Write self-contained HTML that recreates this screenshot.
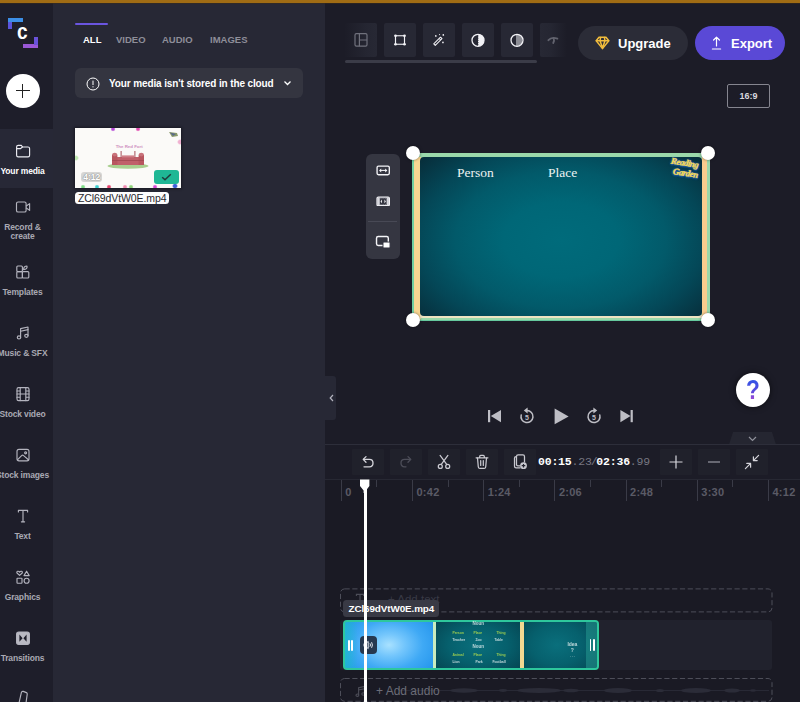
<!DOCTYPE html>
<html lang="en">
<head>
<meta charset="utf-8">
<title>Clipchamp editor</title>
<style>
*{box-sizing:border-box;margin:0;padding:0}
html,body{width:800px;height:702px;overflow:hidden;background:#1c1c27;font-family:"Liberation Sans",sans-serif;color:#fff}
.abs{position:absolute}
#app{position:relative;width:800px;height:702px;overflow:hidden;background:#1c1c27}
#topbar{left:0;top:0;width:800px;height:2.6px;background:#a06c14;z-index:50}
#topshadow{left:0;top:2.6px;width:800px;height:1.6px;background:#3a2c1a;opacity:.55;z-index:50}
/* sidebar */
#side{left:0;top:0;width:53px;height:702px;background:#1e1e2a}
#side .sel{left:0;top:128.5px;width:53px;height:59.8px;background:#272836}
.sitem{left:-14px;width:73px;text-align:center;font-size:8.5px;font-weight:bold;color:#a9a9b3;line-height:9.5px;white-space:nowrap;letter-spacing:-.15px}
.sitem.on{color:#fff}
svg.sic{fill:none;stroke:#b4b4be;stroke-width:1.15;stroke-linecap:round;stroke-linejoin:round}
#plus{left:5.6px;top:73.6px;width:34px;height:34px;border-radius:50%;background:#fff}
#plus:before{content:"";position:absolute;left:10px;top:16.5px;width:14px;height:1.4px;background:#222}
#plus:after{content:"";position:absolute;left:16.3px;top:10px;width:1.4px;height:14px;background:#222}
/* media panel */
#panel{left:53px;top:0;width:272px;height:702px;background:#272835}
.tab{top:34px;font-size:9.5px;font-weight:bold;color:#8e8e99;letter-spacing:0;line-height:12px}
.tab.on{color:#fff}
#tabline{left:75px;top:23.4px;width:33px;height:2px;background:#6a55e0;border-radius:1px}
#banner{left:75px;top:68px;width:228px;height:30px;border-radius:6px;background:#343540}
#banner .txt{left:34px;top:10px;font-size:10px;font-weight:bold;color:#fff;line-height:12px;white-space:nowrap;letter-spacing:-.12px}
#thumb{left:75.2px;top:128.3px;width:106px;height:59.5px;background:#f5f3f2;overflow:hidden;box-shadow:0 0 2px 1px rgba(15,15,22,.55)}
#fname{left:75.2px;top:192px;width:94px;height:12.4px;border-radius:3.5px;background:#fdfdfd;color:#2a2a30;font-size:10.5px;line-height:12.6px;text-align:center;white-space:nowrap;letter-spacing:-.1px}
/* top toolbar */
.tbtn{top:22.5px;height:34px;background:#272834;border-radius:2px}
.tbtn svg{position:absolute;left:50%;top:50%;transform:translate(-50%,-50%)}
#tscroll{left:345px;top:60px;width:192px;height:3px;background:#3b3c48;border-radius:2px}
#upgrade{left:578px;top:26px;width:110px;height:34px;border-radius:17px;background:#2b2c37}
#upgrade span{position:absolute;left:40px;top:10.8px;font-size:13px;font-weight:bold;line-height:14px;color:#fff}
#export{left:695px;top:26px;width:90px;height:34px;border-radius:17px;background:#5a49d6}
#export span{position:absolute;left:36px;top:10.8px;font-size:13px;font-weight:bold;line-height:14px;color:#fff}
#ratio{left:727px;top:84px;width:43px;height:24px;border:1px solid #85858f;border-radius:2px;font-size:9px;font-weight:bold;line-height:22px;text-align:center;color:#d8d8de}
/* preview */
#ftool{left:366px;top:153.8px;width:33.5px;height:105.2px;border-radius:6px;background:#353641}
#ftool .sep{left:2px;top:66.9px;width:29px;height:1px;background:#484955}
#frame{left:412px;top:153px;width:297.5px;height:168px;border-radius:2px;background:#9ad8aa;overflow:hidden}
#frame .gl{left:0;top:6px;width:2.2px;height:162px;background:#70cfa2}
#frame .gb{left:0;top:166.6px;width:297.5px;height:1.4px;background:#66c99e}
#frame .yl{left:2px;top:3.5px;width:6.5px;height:162px;background:#f8d692}
#frame .yr{left:289.5px;top:3.5px;width:5px;height:162px;background:#f9cc8e}
#frame .yb{left:8px;top:162px;width:282px;height:3.2px;background:#efe4c2}
#frame .in{left:8px;top:3.5px;width:282px;height:159px;border-radius:4px;background:radial-gradient(ellipse 68% 78% at 50% 52%,#006b7b 0%,#006777 30%,#025a6a 55%,#044757 75%,#063644 90%,#072c38 100%)}
.handle{width:14px;height:14px;border-radius:50%;background:#fff;box-shadow:0 0 3px rgba(0,0,0,.5)}
#rg{left:670px;top:159px;-webkit-text-stroke:.35px #f6da55;width:32px;font-family:"Liberation Serif",serif;font-style:italic;font-weight:bold;font-size:9px;line-height:9.5px;color:#f6da55;letter-spacing:-.5px;transform:rotate(9deg);text-shadow:0 0 1.5px #2d6fd6,0 0 2.5px #3a7fe6,0 1px 2px #2d5fc6;white-space:nowrap}
.ptxt{font-family:"Liberation Serif",serif;font-size:13.5px;color:#eef3f3;line-height:14px}
/* controls */
#help{left:735.8px;top:373px;width:34px;height:34px;border-radius:50%;background:#fff;box-shadow:0 0 6px rgba(0,0,0,.6)}
#help span{position:absolute;left:0;top:1.5px;width:34px;text-align:center;font-size:27px;font-weight:bold;line-height:30px;transform:scaleX(.84);background:linear-gradient(180deg,#2f55e6 15%,#5a48dc 55%,#b24bd4 90%);-webkit-background-clip:text;background-clip:text;color:transparent}
#coll{left:729px;top:432px;width:47px;height:12.5px;background:#252631;clip-path:polygon(4px 0,43px 0,47px 100%,0 100%)}
#handleL{left:325px;top:376px;width:11px;height:43.5px;background:#272835;border-radius:0 3px 3px 0}
/* timeline */
#tl{left:325px;top:444px;width:475px;height:258px;background:#1a1a24}
#tlbar{left:325px;top:444px;width:475px;height:36px;background:#1c1c27;border-top:1px solid #2d2e3a}
.tlb{top:448.5px;height:26.5px;background:#20212b;border-radius:1px}
.tlb svg{position:absolute;left:50%;top:50%;transform:translate(-50%,-50%)}
#time{left:538px;top:455px;font-family:"Liberation Mono",monospace;font-size:11.5px;font-weight:bold;line-height:14px;color:#fff;white-space:nowrap;letter-spacing:-.2px}
#time i.sl{margin:0 -1px}
#time i{font-style:normal;font-weight:normal;color:#777782}
.rl{top:485.5px;font-size:11px;font-weight:bold;color:#5a5b66;line-height:12px;letter-spacing:.25px}
.tick{top:480px;width:1px;background:#3a3b47}
.dash{border:1px dashed #5a5b66;border-radius:4px}
#vtrack{left:340px;top:620px;width:432px;height:50px;background:#21222d;border-radius:3px}
#clip{left:343px;top:620px;width:256px;height:50px;border-radius:4px;background:#2ec79c;overflow:hidden}
.ct{font-size:3.4px;line-height:4px;opacity:.8;color:#e8f2f2;white-space:nowrap;font-weight:bold}
#tip{left:343.2px;top:600.2px;width:96.3px;height:17px;border-radius:3.5px;background:#393a45;font-size:9.9px;font-weight:bold;line-height:17.4px;text-align:center;color:#fff;letter-spacing:-.1px}
#rulerline{left:325px;top:478.5px;width:475px;height:1px;background:#272833}
.addt{font-size:11.5px;line-height:14px;color:#5f606b;white-space:nowrap}
#ph{left:364.3px;top:480px;width:2.4px;height:222px;background:#fff;z-index:20}
</style>
</head>
<body>
<div id="app">
<div id="topbar" class="abs"></div><div id="topshadow" class="abs"></div>

<!-- SIDEBAR -->
<div id="side" class="abs">
  <div class="sel abs"></div>
  <svg class="abs" style="left:7px;top:17px" width="32" height="32" viewBox="0 0 32 32">
    <rect x="1" y="1" width="15" height="4" fill="#3c8fe6"/>
    <rect x="1" y="5" width="4" height="7" fill="#5a55dc"/>
    <rect x="16" y="27" width="15" height="4" fill="#9a58d6"/>
    <rect x="27" y="20" width="4" height="8" fill="#6a52da"/>
    <text x="10" y="22.2" font-family="Liberation Sans, sans-serif" font-weight="bold" font-size="22" textLength="10.6" lengthAdjust="spacingAndGlyphs" fill="#fff">c</text>
  </svg>
  <div id="plus" class="abs"></div>
  <!-- your media -->
  <svg class="abs sic" style="left:14px;top:142px" width="18" height="18" viewBox="0 0 18 18"><path d="M2.6 5.2 V13.2 Q2.6 14.8 4.2 14.8 H14 Q15.6 14.8 15.6 13.2 V6.6 Q15.6 5 14 5 H8.6 L7.3 3.3 H4.2 Q2.6 3.3 2.6 4.9 Z" stroke="#ececf2"/><path d="M2.8 6.6 H6.6 L8.4 5" stroke="#ececf2"/></svg>
  <div class="sitem on abs" style="top:167.2px">Your media</div>
  <!-- record -->
  <svg class="abs sic" style="left:14px;top:198px" width="18" height="18" viewBox="0 0 18 18"><rect x="2.5" y="4" width="9.6" height="10" rx="1.6"/><path d="M12.3 8 L15.6 5.6 V12.4 L12.3 10"/></svg>
  <div class="sitem abs" style="top:223px;line-height:9px">Record &amp;<br>create</div>
  <!-- templates -->
  <svg class="abs sic" style="left:14px;top:263px" width="18" height="18" viewBox="0 0 18 18"><rect x="2.8" y="3" width="5.6" height="5.6" rx="1"/><rect x="2.8" y="8.6" width="5.6" height="6.4" rx="1"/><rect x="8.4" y="8.6" width="6.4" height="6.4" rx="1"/><path d="M9.6 6.6 Q9.6 3 13 3 Q13.6 6.6 9.6 6.6Z"/></svg>
  <div class="sitem abs" style="top:288px">Templates</div>
  <!-- music -->
  <svg class="abs sic" style="left:14px;top:324px" width="18" height="18" viewBox="0 0 18 18"><path d="M6.6 13.2 V4.6 L14 3 V11.6"/><path d="M6.6 7.2 L14 5.6"/><ellipse cx="5" cy="13.4" rx="1.7" ry="1.5"/><ellipse cx="12.4" cy="11.8" rx="1.7" ry="1.5"/></svg>
  <div class="sitem abs" style="top:349px">Music &amp; SFX</div>
  <!-- stock video -->
  <svg class="abs sic" style="left:14px;top:385px" width="18" height="18" viewBox="0 0 18 18"><rect x="3" y="2.6" width="12" height="13" rx="1.6"/><path d="M6.2 2.6 V15.6 M11.8 2.6 V15.6 M6.2 9 H11.8 M3 6 H6.2 M3 9 H6.2 M3 12.2 H6.2 M11.8 6 H15 M11.8 9 H15 M11.8 12.2 H15"/></svg>
  <div class="sitem abs" style="top:410px">Stock video</div>
  <!-- stock images -->
  <svg class="abs sic" style="left:14px;top:446px" width="18" height="18" viewBox="0 0 18 18"><rect x="3" y="3.4" width="12" height="11.4" rx="2"/><path d="M3.6 13.6 L7.6 9.6 Q8.6 8.8 9.6 9.6 L14.4 13.8"/><circle cx="11.6" cy="6.8" r="1"/></svg>
  <div class="sitem abs" style="top:471px">Stock images</div>
  <!-- text -->
  <svg class="abs sic" style="left:14px;top:507px" width="18" height="18" viewBox="0 0 18 18"><path d="M4.4 5 V3.4 H13.6 V5 M9 3.4 V14.8 M7.4 14.8 H10.6"/></svg>
  <div class="sitem abs" style="top:532px">Text</div>
  <!-- graphics -->
  <svg class="abs sic" style="left:14px;top:568px" width="18" height="18" viewBox="0 0 18 18"><path d="M5.6 7.4 L3 5 Q2.4 3.6 3.8 3.3 Q5 3.2 5.6 4.2 Q6.2 3.2 7.4 3.3 Q8.8 3.6 8.2 5 Z"/><path d="M12.6 3.2 L15.2 7.6 H10 Z"/><rect x="3" y="10.2" width="5" height="5" rx=".6"/><circle cx="12.6" cy="12.7" r="2.5"/></svg>
  <div class="sitem abs" style="top:593px">Graphics</div>
  <!-- transitions -->
  <svg class="abs sic" style="left:14px;top:629px" width="18" height="18" viewBox="0 0 18 18"><rect x="2.6" y="3" width="12.8" height="12.4" rx="2.2" fill="#b9b9c2"/><path d="M5.4 5.6 L8.6 9.2 L5.4 12.8 Z M12.6 5.6 L9.4 9.2 L12.6 12.8 Z" fill="#1e1e2a" stroke="none"/></svg>
  <div class="sitem abs" style="top:653.5px">Transitions</div>
  <!-- brand -->
  <svg class="abs sic" style="left:14px;top:688px" width="18" height="18" viewBox="0 0 18 18"><path d="M5 15 L7.4 4.4 Q7.8 3 9.2 3.4 L12.4 4.6 Q13.4 5.2 13.2 6.4 L12 15"/></svg>
</div>

<!-- MEDIA PANEL -->
<div id="panel" class="abs"></div>
<div id="tabline" class="abs"></div>
<div class="tab on abs" style="left:83px">ALL</div>
<div class="tab abs" style="left:116px">VIDEO</div>
<div class="tab abs" style="left:162px">AUDIO</div>
<div class="tab abs" style="left:210px">IMAGES</div>
<div id="banner" class="abs">
  <svg class="abs" style="left:11px;top:8.6px" width="14" height="14" viewBox="0 0 14 14"><circle cx="7" cy="7" r="6" fill="none" stroke="#fff" stroke-width="1"/><rect x="6.5" y="3.6" width="1" height="4.4" fill="#fff"/><rect x="6.5" y="9.2" width="1" height="1.2" fill="#fff"/></svg>
  <div class="txt abs">Your media isn't stored in the cloud</div>
  <svg class="abs" style="left:208px;top:12px" width="9" height="7" viewBox="0 0 9 7"><path d="M1.5 1.5 L4.5 4.5 L7.5 1.5" fill="none" stroke="#fff" stroke-width="1.3"/></svg>
</div>
<div id="thumb" class="abs">
  <div class="abs" style="left:0;top:0;width:106px;height:60px;background:
    radial-gradient(circle at 38px 1px,#b44ad6 0,#b44ad6 1.2px,transparent 2.6px),
    radial-gradient(circle at 63px 1px,#e24ab0 0,#e24ab0 1.2px,transparent 2.6px),
    radial-gradient(circle at 8px 59px,#7ddc86 0,#7ddc86 1.2px,transparent 2.6px),
    radial-gradient(circle at 22px 59px,#3ecfd0 0,#3ecfd0 1.2px,transparent 2.6px),
    radial-gradient(circle at 34px 59px,#e6456e 0,#e6456e 1.2px,transparent 2.6px),
    radial-gradient(circle at 50px 59px,#f08ab0 0,#f08ab0 1.2px,transparent 2.6px),
    radial-gradient(circle at 56px 59px,#8ed47a 0,#8ed47a 1.2px,transparent 2.6px),
    radial-gradient(circle at 80px 59px,#d84ad6 0,#d84ad6 1.2px,transparent 2.6px),
    radial-gradient(circle at 100px 58px,#3a5fd8 0,#3a5fd8 1.5px,transparent 3px),
    radial-gradient(circle at 1px 30px,#bfe8b0 0,#bfe8b0 1.5px,transparent 3px),
    radial-gradient(circle at 105px 14px,#f0b0d0 0,#f0b0d0 1.5px,transparent 3px),
    #fbfaf8"></div>
  <div class="abs" style="left:40px;top:15.4px;width:28px;font-size:4.4px;line-height:5px;font-weight:bold;color:#cf8fc0;text-align:center;white-space:nowrap">The Red Fort</div>
  <svg class="abs" style="left:32px;top:20px" width="42" height="22" viewBox="0 0 42 22">
    <ellipse cx="21" cy="18" rx="20.5" ry="2.8" fill="#a9cf8f"/>
    <rect x="5" y="9" width="32" height="8" fill="#c0606a"/>
    <rect x="5" y="6.8" width="5.4" height="10.2" fill="#b8565f"/><rect x="31.6" y="6.8" width="5.4" height="10.2" fill="#b8565f"/>
    <ellipse cx="7.7" cy="6.6" rx="2.6" ry="1.8" fill="#c8727a"/><ellipse cx="34.3" cy="6.6" rx="2.6" ry="1.8" fill="#c8727a"/>
    <rect x="13.6" y="3" width="1" height="6.4" fill="#a8505a"/><rect x="27.4" y="3" width="1" height="6.4" fill="#a8505a"/>
    <rect x="15" y="7.4" width="12" height="2" fill="#d08088"/>
    <rect x="5" y="12" width="32" height=".8" fill="#a04852"/>
  </svg>
  <svg class="abs" style="left:93px;top:3px" width="11" height="7" viewBox="0 0 11 7"><path d="M1 1 L9 2 L10 5 L4 6 Z" fill="#8a9a6a"/><path d="M2 1.4 L8 3 L5 5 Z" fill="#5a6a8a"/></svg>
  <div class="abs" style="left:6px;top:44px;width:21px;height:10px;border-radius:3px;background:rgba(150,150,150,.35)"></div>
  <div class="abs" style="left:6px;top:44px;width:21px;font-size:8.5px;line-height:10px;font-weight:bold;color:#fff;text-align:center;text-shadow:0 0 1.5px #777,0 0 1px #888">4:12</div>
  <div class="abs" style="left:79px;top:41.5px;width:25px;height:14px;border-radius:3px;background:#1fb795">
    <svg class="abs" style="left:7px;top:3px" width="11" height="8" viewBox="0 0 11 8"><path d="M1.2 4.2 L4 6.8 L9.8 1.2" fill="none" stroke="#1e3b3a" stroke-width="1.5"/></svg>
  </div>
</div>
<div id="fname" class="abs">ZCl69dVtW0E.mp4</div>

<!-- TOP TOOLBAR -->
<div class="tbtn abs" style="left:344px;width:33px;background:linear-gradient(90deg,#1c1c27 0%,#252632 70%,#272834 100%)">
  <svg width="16" height="16" viewBox="0 0 16 16" fill="none" stroke="#70717c" stroke-width="1.2"><rect x="2" y="1.6" width="12" height="12.6" rx="1.4"/><path d="M6.4 1.6 V14.2 M6.4 8 H14"/></svg>
</div>
<div class="tbtn abs" style="left:383.5px;width:32.5px">
  <svg width="14.4" height="13.6" viewBox="0 0 16 16" preserveAspectRatio="none" fill="none" stroke="#f2f2f6" stroke-width="1.3"><rect x="3" y="3" width="10" height="10"/><g fill="#f2f2f6" stroke="none"><circle cx="3" cy="3" r="1.5"/><circle cx="13" cy="3" r="1.5"/><circle cx="3" cy="13" r="1.5"/><circle cx="13" cy="13" r="1.5"/></g></svg>
</div>
<div class="tbtn abs" style="left:422.5px;width:32.5px">
  <svg width="15" height="15" viewBox="0 0 16 16" fill="none" stroke="#f2f2f6" stroke-width="1.1" stroke-linejoin="round"><path d="M2.4 12.2 L9.6 5 L11.2 6.6 L4 13.8 Z"/><path d="M8.2 6.4 L9.8 8"/><g fill="#f2f2f6" stroke="none"><circle cx="4.6" cy="3.6" r=".9"/><circle cx="12.6" cy="2.6" r=".9"/><circle cx="12.2" cy="10.6" r=".9"/><circle cx="8.6" cy="2.2" r=".6"/></g></svg>
</div>
<div class="tbtn abs" style="left:461.5px;width:32.5px">
  <svg width="16" height="16" viewBox="0 0 16 16"><circle cx="8" cy="8.3" r="6" fill="none" stroke="#f2f2f6" stroke-width="1.3"/><path d="M8 2.3 A6 6 0 0 1 8 14.3 Z" fill="#f2f2f6"/><path d="M8 3.4 V13.2" stroke="#272834" stroke-width=".8" stroke-dasharray="1.2 1"/></svg>
</div>
<div class="tbtn abs" style="left:500.5px;width:32.5px">
  <svg width="16" height="16" viewBox="0 0 16 16" fill="none" stroke="#f2f2f6"><circle cx="8" cy="8.3" r="6" stroke-width="1.3"/><path d="M8 2.3 V14.3 M10 2.9 V13.7 M12 4.2 V12.4" stroke-width="1"/></svg>
</div>
<div class="tbtn abs" style="left:539.5px;width:27px;background:linear-gradient(90deg,#272834 0%,#252632 40%,#1c1c27 100%)">
  <svg width="16" height="16" viewBox="0 0 16 16" fill="none" stroke="#62636e" stroke-width="1.8" stroke-linecap="round" stroke-linejoin="round"><path d="M3.4 8.2 Q6.6 4.4 12.4 6.6"/><path d="M8.6 6.4 Q9.6 8.4 8.2 11"/></svg>
</div>
<div id="tscroll" class="abs"></div>
<div id="upgrade" class="abs"><svg class="abs" style="left:17px;top:10px" width="15" height="14" viewBox="0 0 15 14" fill="none" stroke="#f2bd3d" stroke-width="1.5" stroke-linejoin="round" stroke-linecap="round"><path d="M4 1.2 H11 L13.8 4.8 L7.5 12.6 L1.2 4.8 Z"/><path d="M1.4 4.8 H13.6 M5.6 1.4 L5 4.8 L7.5 12 L10 4.8 L9.4 1.4"/></svg><span>Upgrade</span></div>
<div id="export" class="abs"><svg class="abs" style="left:16px;top:10px" width="11" height="14" viewBox="0 0 11 14" fill="none" stroke="#fff" stroke-width="1.2" stroke-linecap="round" stroke-linejoin="round"><path d="M5.5 10 V1.2 M2.6 4 L5.5 1.2 L8.4 4 M1.4 13 H9.6"/></svg><span>Export</span></div>
<div id="ratio" class="abs">16:9</div>

<!-- PREVIEW -->
<div id="ftool" class="abs"><div class="sep abs"></div>
  <svg class="abs" style="left:9.6px;top:11.6px" width="14.4" height="10.8" viewBox="0 0 16 12"><rect x="1.2" y="1.2" width="13.6" height="9.6" rx="1.6" fill="none" stroke="#f4f4f7" stroke-width="1.5"/><path d="M4.4 6 H11.6" stroke="#f4f4f7" stroke-width="1.2"/><path d="M5.8 3.8 L3.4 6 L5.8 8.2 Z M10.2 3.8 L12.6 6 L10.2 8.2 Z" fill="#f4f4f7"/></svg>
  <svg class="abs" style="left:9.6px;top:41.8px" width="14.4" height="10.8" viewBox="0 0 16 12"><rect x="1.2" y="1.2" width="13.6" height="9.6" rx="1.4" fill="none" stroke="#f4f4f7" stroke-width="1.5"/><rect x="1.6" y="1.6" width="2.6" height="8.8" fill="#d8d8de"/><rect x="11.8" y="1.6" width="2.6" height="8.8" fill="#d8d8de"/><path d="M6.6 4 L5 6 L6.6 8 Z M9.4 4 L11 6 L9.4 8 Z" fill="#f4f4f7"/><path d="M4.8 2.4 H11.2 M4.8 9.6 H11.2" stroke="#9b9ca6" stroke-width="1" stroke-dasharray="1.4 1"/></svg>
  <svg class="abs" style="left:9.2px;top:81.6px" width="16.2" height="14.3" viewBox="0 0 17 15"><rect x="1.6" y="1.6" width="12.4" height="9.4" rx="1.8" fill="none" stroke="#f4f4f7" stroke-width="1.5"/><rect x="8.4" y="7.4" width="7.4" height="6.2" rx="1" fill="#fff" stroke="#353641" stroke-width="1"/></svg>
</div>
<div id="frame" class="abs"><div class="gl abs"></div><div class="gb abs"></div><div class="yl abs"></div><div class="yr abs"></div><div class="yb abs"></div><div class="in abs"></div></div>
<div class="ptxt abs" style="left:457px;top:166px">Person</div>
<div class="ptxt abs" style="left:548px;top:166px">Place</div>
<div class="abs" id="rg">Reading<br>&nbsp;&nbsp;Garden</div>
<div class="handle abs" style="left:406px;top:146px"></div>
<div class="handle abs" style="left:700.5px;top:146px"></div>
<div class="handle abs" style="left:406px;top:312.5px"></div>
<div class="handle abs" style="left:700.5px;top:312.5px"></div>

<!-- CONTROLS -->
<svg class="abs" style="left:486px;top:406px" width="150" height="22" viewBox="0 0 150 22">
  <g fill="#bebec5">
    <rect x="2" y="4" width="2.2" height="12.2"/><path d="M15 4 V16.2 L4.8 10.1 Z"/>
    <path d="M68.6 2.4 L82.6 10.4 L68.6 18.2 Z"/>
    <path d="M134.4 4 V16.2 L144.6 10.1 Z"/><rect x="144.6" y="4" width="2.2" height="12.2"/>
  </g>
  <g fill="none" stroke="#bebec5" stroke-width="1.5" stroke-linecap="round">
    <path d="M41 4.6 A6 6 0 1 1 35.2 9"/>
    <path d="M108 4.6 A6 6 0 1 0 113.8 9"/>
  </g>
  <path d="M41.6 1.6 V7.6 L37.8 4.6 Z" fill="#bebec5"/>
  <path d="M107.4 1.6 V7.6 L111.2 4.6 Z" fill="#bebec5"/>
  <text x="41" y="13.6" text-anchor="middle" font-family="Liberation Sans, sans-serif" font-weight="bold" font-size="7" fill="#bebec5">5</text>
  <text x="108" y="13.6" text-anchor="middle" font-family="Liberation Sans, sans-serif" font-weight="bold" font-size="7" fill="#bebec5">5</text>
</svg>
<div id="handleL" class="abs"><svg class="abs" style="left:4px;top:18px" width="5" height="8" viewBox="0 0 5 8"><path d="M4 1 L1.2 4 L4 7" fill="none" stroke="#b4b4be" stroke-width="1.2"/></svg></div>
<div id="help" class="abs"><span>?</span></div>
<div id="coll" class="abs"><svg class="abs" style="left:19px;top:3.5px" width="9" height="6" viewBox="0 0 9 6"><path d="M1 1 L4.5 4.4 L8 1" fill="none" stroke="#8f909a" stroke-width="1.2"/></svg></div>

<!-- TIMELINE -->
<div id="tl" class="abs"></div>
<div id="tlbar" class="abs"></div>
<div class="tlb abs" style="left:352px;width:32px"><svg width="14" height="14" viewBox="0 0 14 14" fill="none" stroke="#d6d6dc" stroke-width="1.3" stroke-linecap="round" stroke-linejoin="round"><path d="M5 1.6 L2.2 4.4 L5 7.2"/><path d="M2.6 4.4 H8.4 Q12 4.4 12 8 Q12 11.8 8.4 11.8 H3"/></svg></div>
<div class="tlb abs" style="left:390px;width:32px"><svg width="14" height="14" viewBox="0 0 14 14" fill="none" stroke="#4d4e59" stroke-width="1.3" stroke-linecap="round" stroke-linejoin="round"><path d="M9 1.6 L11.8 4.4 L9 7.2"/><path d="M11.4 4.4 H5.6 Q2 4.4 2 8 Q2 11.8 5.6 11.8 H7"/></svg></div>
<div class="tlb abs" style="left:428px;width:32px"><svg width="15" height="16" viewBox="0 0 15 16" fill="none" stroke="#c9c9d0" stroke-width="1.25" stroke-linecap="round"><path d="M3.6 1.4 L10.4 10.6 M11.4 1.4 L4.6 10.6"/><circle cx="3.8" cy="12.4" r="2"/><circle cx="11.2" cy="12.4" r="2"/></svg></div>
<div class="tlb abs" style="left:466px;width:32px"><svg width="15" height="16" viewBox="0 0 15 16" fill="none" stroke="#c9c9d0" stroke-width="1.25" stroke-linecap="round" stroke-linejoin="round"><path d="M1.6 3.8 H13.4 M5.2 3.6 V2.4 Q5.2 1.4 6.2 1.4 H8.8 Q9.8 1.4 9.8 2.4 V3.6"/><path d="M3 4 L3.8 13 Q4 14.4 5.4 14.4 H9.6 Q11 14.4 11.2 13 L12 4"/><path d="M6.2 6.6 V11.4 M8.8 6.6 V11.4"/></svg></div>
<div class="tlb abs" style="left:504px;width:32px"><svg width="15" height="17" viewBox="0 0 15 17" fill="none" stroke="#c9c9d0" stroke-width="1.25" stroke-linejoin="round"><path d="M4 3 Q4 1.4 5.6 1.4 H10.4 Q12 1.4 12 3 V9"/><path d="M8 14.4 H3.6 Q2 14.4 2 12.8 V4.6 Q2 3 3.6 3 H4 V11 Q4 12.4 5.4 12.4 H7.6"/><circle cx="11" cy="12.2" r="3.4" fill="#c9c9d0" stroke="none"/><path d="M11 10.4 V14 M9.2 12.2 H12.8" stroke="#22232e" stroke-width="1.2"/></svg></div>
<div class="tlb abs" style="left:660px;width:32px"><svg width="14" height="14" viewBox="0 0 14 14" fill="none" stroke="#d6d6dc" stroke-width="1.2"><path d="M7 .5 V13.5 M.5 7 H13.5"/></svg></div>
<div class="tlb abs" style="left:698px;width:32px"><svg width="14" height="14" viewBox="0 0 14 14" fill="none" stroke="#8f909a" stroke-width="1.3"><path d="M1 7 H13"/></svg></div>
<div class="tlb abs" style="left:736px;width:32px"><svg width="16" height="16" viewBox="0 0 16 16" fill="none" stroke="#d6d6dc" stroke-width="1.2" stroke-linecap="round" stroke-linejoin="round"><path d="M14.6 1.4 L9.4 6.6 M9.4 2.8 V6.6 H13.2 M1.4 14.6 L6.6 9.4 M2.8 9.4 H6.6 V13.2"/></svg></div>
<!-- ruler -->
<div id="rulerline" class="abs"></div>
<div class="tick abs" style="left:340.8px;height:21px"></div><div class="rl abs" style="left:345.3px">0</div>
<div class="tick abs" style="left:412.0px;height:21px"></div><div class="rl abs" style="left:416.5px">0:42</div>
<div class="tick abs" style="left:483.2px;height:21px"></div><div class="rl abs" style="left:487.7px">1:24</div>
<div class="tick abs" style="left:554.4px;height:21px"></div><div class="rl abs" style="left:558.9px">2:06</div>
<div class="tick abs" style="left:625.6px;height:21px"></div><div class="rl abs" style="left:630.1px">2:48</div>
<div class="tick abs" style="left:696.8px;height:21px"></div><div class="rl abs" style="left:701.3px">3:30</div>
<div class="tick abs" style="left:768.0px;height:21px"></div><div class="rl abs" style="left:772.5px">4:12</div>
<div class="tick abs" style="left:376.4px;height:7px"></div>
<div class="tick abs" style="left:447.6px;height:7px"></div>
<div class="tick abs" style="left:518.8px;height:7px"></div>
<div class="tick abs" style="left:590.0px;height:7px"></div>
<div class="tick abs" style="left:661.2px;height:7px"></div>
<div class="tick abs" style="left:732.4px;height:7px"></div>
<div id="time" class="abs">00:15<i>.23</i><i class="sl">/</i>02:36<i>.99</i></div>
<div id="vtrack" class="abs"></div>
<svg class="abs" style="left:339px;top:587px" width="435" height="27" viewBox="0 0 435 27"><rect x="1.5" y="1.9" width="431.5" height="23" rx="4" fill="none" stroke="#4d4e59" stroke-width="1" stroke-dasharray="5.2 2.6"/></svg>
<svg class="abs" style="left:355px;top:593px" width="10" height="12" viewBox="0 0 10 12" fill="none" stroke="#4c4d58" stroke-width="1.1"><path d="M1.4 3 V1.4 H8.6 V3 M5 1.4 V10.6 M3.6 10.6 H6.4"/></svg>
<div class="addt abs" style="left:388px;top:592px;color:#383944">+ Add text</div>
<svg class="abs" style="left:339px;top:677px" width="435" height="27" viewBox="0 0 435 27"><rect x="1.5" y="1.5" width="431.5" height="22.8" rx="4" fill="none" stroke="#4d4e59" stroke-width="1" stroke-dasharray="5.2 2.6"/>
<g fill="#2b2c38"><rect x="60" y="13.1" width="370" height=".9"/><ellipse cx="125" cy="13.5" rx="14" ry="2.2"/><ellipse cx="164" cy="13.5" rx="4" ry="1.4"/><ellipse cx="200" cy="13.5" rx="22" ry="2.4"/><ellipse cx="232" cy="13.5" rx="8" ry="1.8"/><ellipse cx="279" cy="13.5" rx="14" ry="2.6"/><ellipse cx="321" cy="13.5" rx="4" ry="1.6"/><ellipse cx="357" cy="13.5" rx="15" ry="2.6"/><ellipse cx="393" cy="13.5" rx="8" ry="2"/><ellipse cx="414" cy="13.5" rx="3" ry="1.2"/></g></svg>
<svg class="abs" style="left:355px;top:685px" width="11" height="13" viewBox="0 0 11 13" fill="none" stroke="#4c4d58" stroke-width="1.1"><path d="M3.6 10 V2.6 L9.4 1.4 V8.8 M3.6 5 L9.4 3.8"/><ellipse cx="2.4" cy="10.2" rx="1.4" ry="1.2"/><ellipse cx="8.2" cy="9" rx="1.4" ry="1.2"/></svg>
<div class="addt abs" style="left:376px;top:683.5px;font-size:12px;color:#6c6d78">+ Add audio</div>
<div id="clip" class="abs">
  <div class="abs" style="left:2px;top:2px;width:88px;height:46px;border-radius:2px 0 0 2px;background:radial-gradient(ellipse 62% 85% at 50% 50%,#a8e1ff 0%,#74c6fc 28%,#3fa9f5 62%,#2495ec 100%)"></div>
  <div class="abs" style="left:2px;top:2px;width:13px;height:46px;border-radius:2px 0 0 2px;background:linear-gradient(90deg,rgba(30,190,200,.75),rgba(30,170,220,.0))"></div>
  <div class="abs" style="left:90px;top:2px;width:2.5px;height:46px;background:#c9ecc0"></div>
  <div class="abs" style="left:92.5px;top:2px;width:84.5px;height:46px;background:radial-gradient(ellipse 70% 80% at 50% 50%,#0a6f7c 0%,#06606d 50%,#054451 100%)"></div>
  <div class="abs" style="left:177px;top:2px;width:3.5px;height:46px;background:#f3d891"></div>
  <div class="abs" style="left:180.5px;top:2px;width:73.5px;height:46px;border-radius:0 2px 2px 0;background:radial-gradient(ellipse 70% 85% at 45% 50%,#0a6f7c 0%,#06606d 50%,#054753 100%)"></div>
  <div class="abs" style="left:243px;top:2px;width:11px;height:46px;border-radius:0 2px 2px 0;background:rgba(40,160,150,.5)"></div>
  <div class="abs" style="left:5px;top:20px;width:1.8px;height:11px;background:#fff;border-radius:1px"></div>
  <div class="abs" style="left:8.4px;top:20px;width:1.8px;height:11px;background:#fff;border-radius:1px"></div>
  <div class="abs" style="left:246.5px;top:19px;width:1.8px;height:12px;background:#fff;border-radius:1px"></div>
  <div class="abs" style="left:250px;top:19px;width:1.8px;height:12px;background:#fff;border-radius:1px"></div>
  <div class="abs" style="left:17px;top:16px;width:17px;height:18px;border-radius:4px;background:#26384f">
    <svg class="abs" style="left:3px;top:4px" width="11" height="10" viewBox="0 0 11 10" fill="none" stroke="#e4e8ee" stroke-width="1"><path d="M1 3.6 H2.8 L5.2 1.4 V8.6 L2.8 6.4 H1 Z"/><path d="M7 3.4 Q8 5 7 6.6 M8.6 2.2 Q10.2 5 8.6 7.8"/></svg>
  </div>
  <div class="ct abs" style="left:109.4px;top:11.2px;color:#b9e24a">Person</div><div class="ct abs" style="left:130.4px;top:11.2px;color:#b9e24a">Place</div><div class="ct abs" style="left:153.4px;top:11.2px;color:#b9e24a">Thing</div>
  <div class="ct abs" style="left:109.4px;top:18.2px">Teacher</div><div class="ct abs" style="left:132.4px;top:18.2px">Zoo</div><div class="ct abs" style="left:151.4px;top:18.2px">Table</div>
  <div class="ct abs" style="left:109.4px;top:33.2px;color:#b9e24a">Animal</div><div class="ct abs" style="left:130.4px;top:33.2px;color:#b9e24a">Place</div><div class="ct abs" style="left:153.4px;top:33.2px;color:#b9e24a">Thing</div>
  <div class="ct abs" style="left:109.4px;top:40.2px">Lion</div><div class="ct abs" style="left:132.4px;top:40.2px">Park</div><div class="ct abs" style="left:149.4px;top:40.2px">Football</div>
  <div class="ct abs" style="left:129.4px;top:2.2px;font-size:4.5px">Noun</div><div class="ct abs" style="left:129.4px;top:25.2px;font-size:4.5px">Noun</div>
  <div class="ct abs" style="left:224.4px;top:21px;font-size:5px;line-height:6px;text-align:center">Idea<br>?<br><span style="font-size:3px">· · ·</span></div>
</div>
<div id="tip" class="abs">ZCl69dVtW0E.mp4</div>
<div id="ph" class="abs"></div>
<svg class="abs" style="left:359px;top:478.6px;z-index:21" width="12" height="14" viewBox="0 0 12 14"><path d="M1 .6 H10.4 V7 L7 11.6 V14 H4.6 V11.6 L1 7 Z" fill="#fff"/></svg>

</div>
</body>
</html>
